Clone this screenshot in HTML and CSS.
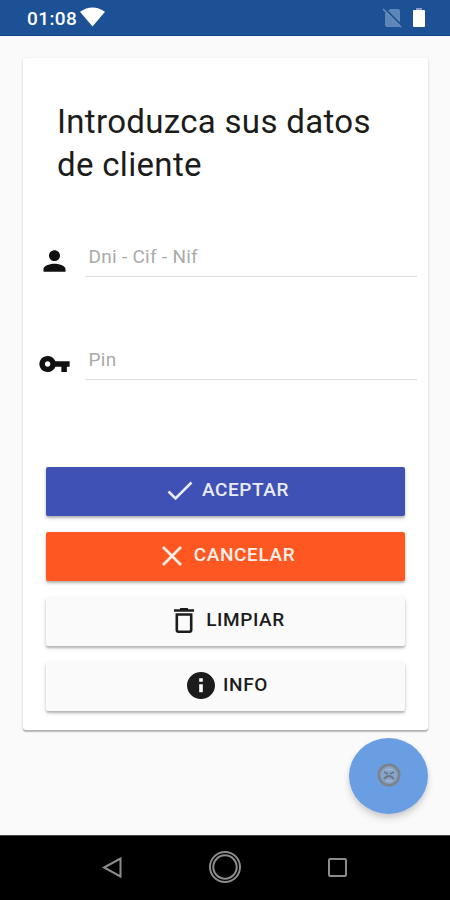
FILE: index.html
```html
<!DOCTYPE html>
<html lang="es">
<head>
<meta charset="utf-8">
<title>Datos de cliente</title>
<link rel="stylesheet" href="styles.css">
</head>
<body>
<header class="status">
  <span class="clock">01:08</span>
  <svg class="wifi" viewBox="0 0 26 20"><path d="M0 4.500Q13-4.500 26 4.500L13 20z"/></svg>
  <span class="spacer"></span>
  <svg class="sim" viewBox="0 0 19 20"><path fill="#5f86b8" d="M7 1h8q2 0 2 2v16H4q-2 0-2-2V6z"/><path stroke="#1c5295" stroke-width="2" d="M1 0l18 18"/><path stroke="#6b8fbe" stroke-width="1.500" d="M0 1l18 18"/></svg>
  <svg class="battery" viewBox="0 0 12 20"><path fill="#7f9fc8" d="M3 0h6v3H3z"/><rect y="2" width="12" height="17" rx="1"/></svg>
</header>
<main class="page">
  <section class="card">
    <h1 class="title">Introduzca sus datos<br>de cliente</h1>
    <div class="field">
      <svg class="field-icon" viewBox="0 0 24 24" preserveAspectRatio="none"><path d="M12 12c2.210 0 4-1.790 4-4s-1.790-4-4-4-4 1.790-4 4 1.790 4 4 4zm0 2c-2.670 0-8 1.340-8 4v2h16v-2c0-2.660-5.330-4-8-4z"/></svg>
      <input class="input" type="text" placeholder="Dni - Cif - Nif">
    </div>
    <div class="field">
      <svg class="field-icon" viewBox="0 0 24 24" preserveAspectRatio="none"><path d="M12.650 10C11.830 7.670 9.610 6 7 6c-3.310 0-6 2.690-6 6s2.690 6 6 6c2.610 0 4.830-1.670 5.650-4H17v4h4v-4h2v-4H12.650zM7 14c-1.100 0-2-.9-2-2s.9-2 2-2 2 .9 2 2-.9 2-2 2z"/></svg>
      <input class="input" type="password" placeholder="Pin">
    </div>
    <div class="actions">
      <button class="btn accept"><svg class="check" viewBox="0 0 26 20"><path d="M1.500 10.500l7 7L24.500 1.500"/></svg><span class="label">ACEPTAR</span></button>
      <button class="btn cancel"><svg class="cross" viewBox="0 0 20 20"><path d="M1 1l18 18M19 1L1 19"/></svg><span class="label">CANCELAR</span></button>
      <button class="btn clear"><svg class="bin" viewBox="0 0 20 25"><path d="M0 2.500h20M6 1.200h8M2.800 6.500h14.400v15.500q0 1.700-1.700 1.700h-11q-1.700 0-1.700-1.700z"/></svg><span class="label">LIMPIAR</span></button>
      <button class="btn"><svg class="info" viewBox="2 2 20 20" preserveAspectRatio="none"><path d="M12 2C6.480 2 2 6.480 2 12s4.480 10 10 10 10-4.480 10-10S17.520 2 12 2zm1.300 15h-2.600v-6h2.600v6zm0-7.700h-2.600V6.700h2.600v2.600z"/></svg><span class="label">INFO</span></button>
    </div>
  </section>
  <button class="fab" aria-label="Ayuda">
    <svg class="fab-icon" viewBox="0 0 24 24"><circle cx="12" cy="12" r="10.200" fill="#8aa0bd" stroke="#7d838c" stroke-width="2.600"/><circle cx="12" cy="12" r="7.500" fill="#86a5cf"/><path d="M7 9l4 2M17 9l-4 2M7 16q5-6 10 0" fill="none" stroke="#6b7480" stroke-width="1.800"/><path d="M8 6.500h8M9 18h6" stroke="#a3b5cc" stroke-width="1.500"/></svg>
  </button>
</main>
<nav class="navbar">
  <svg class="nav-icon" viewBox="0 0 34 34"><path d="M24.500 8.500v18L8 17.500z"/></svg>
  <svg class="nav-icon" viewBox="0 0 34 34"><circle cx="17" cy="17" r="15"/><circle cx="17" cy="17" r="11.700"/></svg>
  <svg class="nav-icon" viewBox="0 0 34 34"><rect x="8" y="9" width="17" height="17" rx="1"/></svg>
</nav>
</body>
</html>
```

FILE: styles.css
```css
* { box-sizing: border-box; }

body {
  margin: 0;
  width: 450px;
  height: 900px;
  display: flex;
  flex-direction: column;
  overflow: hidden;
  background: #fafafa;
  color: #1c1c1c;
  font-family: Roboto, "Liberation Sans", sans-serif;
}

.status {
  height: 36px;
  flex: none;
  display: flex;
  align-items: flex-start;
  padding: 7px 25px 0 27px;
  background: #1c5295;
  border-bottom: 1px solid #174684;
}

.clock {
  margin-top: 1px;
  color: #fff;
  font-size: 19px;
  line-height: 22px;
  font-weight: 500;
  letter-spacing: 0.4px;
}

.wifi { width: 25px; height: 20px; margin-left: 2.5px; fill: #fff; }
.spacer { flex: 1; }
.sim { width: 19px; height: 20px; margin: 1px 11px 0 0; }
.battery { width: 12px; height: 20px; margin-top: 1px; fill: #fff; }

.page {
  flex: 1;
  display: flex;
  flex-direction: column;
  padding: 22px 22px 0 23px;
}

.card {
  height: 672px;
  flex: none;
  padding: 42px 11px 0 14px;
  border-radius: 3px;
  background: #fff;
  box-shadow: 0 2px 1px rgba(0, 0, 0, 0.2), 0 1px 3px rgba(0, 0, 0, 0.16);
}

.title {
  margin: 0 0 53px 20px;
  font-size: 33px;
  line-height: 43px;
  font-weight: 400;
  letter-spacing: 0.32px;
  white-space: nowrap;
}

.field {
  height: 38px;
  display: flex;
  align-items: flex-start;
  margin-bottom: 65px;
}

.field-icon {
  width: 33px;
  height: 32px;
  flex: none;
  margin: 5.500px 14px 0 0.5px;
  fill: #111;
}

.input {
  flex: 1;
  min-width: 0;
  height: 38px;
  padding: 0 4px 2px;
  border: 0;
  border-bottom: 1px solid #ddd;
  outline: 0;
  background: none;
  color: #1c1c1c;
  font: 400 19px/35px Roboto, "Liberation Sans", sans-serif;
  letter-spacing: 0.28px;
}

.input::placeholder { color: #aaa; opacity: 1; }

.actions {
  display: grid;
  gap: 16px;
  padding: 22px 12px 0 9px;
}

.btn {
  height: 49px;
  display: flex;
  align-items: center;
  justify-content: center;
  padding: 0 0 2px 4px;
  border: 0;
  border-radius: 2px;
  background: #fafafa;
  color: #1c1c1c;
  font: 500 19px/24px Roboto, "Liberation Sans", sans-serif;
  letter-spacing: 0.6px;
  box-shadow: 0 2px 2px rgba(0, 0, 0, 0.2), 0 2px 5px rgba(0, 0, 0, 0.14);
}

.accept { padding-left: 5px; background: #3f51b5; color: #e8ebf9; }
.cancel { padding-left: 6px; background: #ff5722; color: #fff0ea; }
.clear { padding-left: 8px; }
.label { margin-top: -1px; }

.check, .cross, .bin { fill: none; stroke: currentColor; stroke-width: 2.6; }
.check { width: 26px; height: 20px; margin-right: 9px; }
.cross { width: 20px; height: 20px; margin-right: 12px; }
.bin { width: 20px; height: 25px; margin-right: 12px; }
.info { width: 28px; height: 27px; margin-right: 8px; fill: currentColor; }

.fab {
  width: 79px;
  height: 76px;
  align-self: flex-end;
  display: grid;
  place-items: center;
  margin-top: 8px;
  padding: 0;
  border: 0;
  border-radius: 50%;
  background: #699fe2;
  box-shadow: 0 5px 7px rgba(0, 0, 0, 0.14), 0 2px 4px rgba(0, 0, 0, 0.06);
}

.fab-icon { width: 24px; height: 24px; margin-bottom: 2px; }

.navbar {
  height: 65px;
  flex: none;
  display: flex;
  justify-content: center;
  gap: 78.5px;
  padding-top: 14px;
  border-top: 1px solid #444;
  background: #000;
}

.nav-icon { width: 34px; height: 34px; fill: none; stroke: #8c8c8c; stroke-width: 2; }
```
